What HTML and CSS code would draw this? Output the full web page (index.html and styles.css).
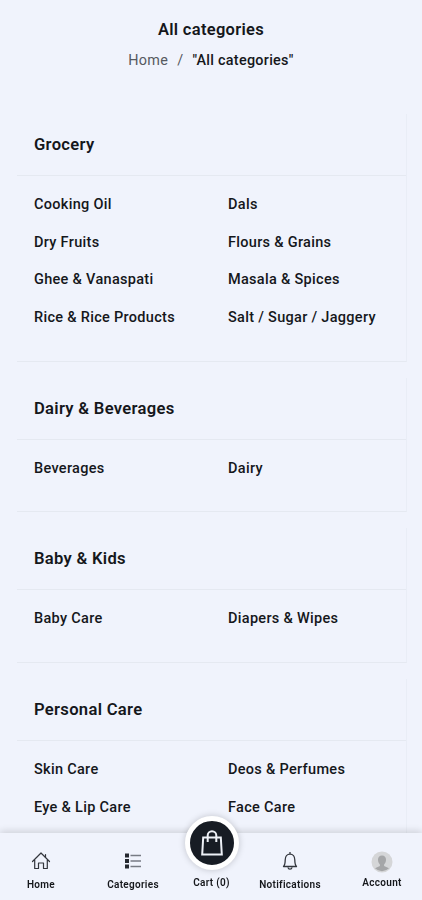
FILE: index.html
```html
<!DOCTYPE html>
<html lang="en">
<head>
    <meta charset="UTF-8">
    <meta name="viewport" content="width=device-width, initial-scale=1.0">
    <title>All categories</title>
    <link rel="stylesheet" href="styles.css">
</head>
<body>
    <main class="page">
        <header class="page-header">
            <h1>All categories</h1>
            <nav class="breadcrumb">
                <a href="#">Home</a>
                <span class="slash">/</span>
                <strong>"All categories"</strong>
            </nav>
        </header>

        <section class="card">
            <h2>Grocery</h2>
            <ul>
                <li>Cooking Oil</li>
                <li>Dals</li>
                <li>Dry Fruits</li>
                <li>Flours &amp; Grains</li>
                <li>Ghee &amp; Vanaspati</li>
                <li>Masala &amp; Spices</li>
                <li>Rice &amp; Rice Products</li>
                <li>Salt / Sugar / Jaggery</li>
            </ul>
        </section>

        <section class="card">
            <h2>Dairy &amp; Beverages</h2>
            <ul>
                <li>Beverages</li>
                <li>Dairy</li>
            </ul>
        </section>

        <section class="card">
            <h2>Baby &amp; Kids</h2>
            <ul>
                <li>Baby Care</li>
                <li>Diapers &amp; Wipes</li>
            </ul>
        </section>

        <section class="card">
            <h2>Personal Care</h2>
            <ul>
                <li>Skin Care</li>
                <li>Deos &amp; Perfumes</li>
                <li>Eye &amp; Lip Care</li>
                <li>Face Care</li>
            </ul>
        </section>
    </main>

    <nav class="bottom-nav">
        <a href="#" class="nav-item home">
            <svg width="20" height="20" viewBox="0 0 20 20" fill="none" stroke="#33363d" stroke-width="1.2" stroke-linejoin="round" stroke-linecap="round">
                <path d="M1.500 10.500L10 2l8.500 8.500M3.700 9v8.500h3.800v-5.500h5v5.500h3.800V9M14.500 6.200V3.500"/>
            </svg>
            <span>Home</span>
        </a>
        <a href="#" class="nav-item categories">
            <svg width="18" height="20" viewBox="0 0 18 20">
                <path fill="#25282f" d="M1 2.500h4v4H1zM1 8h4v4H1zM1 13.500h4v4H1z"/>
                <path stroke="#777b84" stroke-width="1.300" d="M6.500 4.500H17M6.500 10H17M6.500 15.500H17"/>
            </svg>
            <span>Categories</span>
        </a>
        <a href="#" class="nav-item cart">
            <div class="cart-circle">
                <svg width="24" height="28" viewBox="0 0 24 28" fill="none" stroke="#eef1f7" stroke-width="2">
                    <path d="M3.200 8.500h17.600l1 17H2.200z"/>
                    <path d="M7.700 13V6.500a4.300 4.300 0 0 1 8.600 0V13"/>
                </svg>
            </div>
            <span>Cart (0)</span>
        </a>
        <a href="#" class="nav-item notifications">
            <svg width="18" height="20" viewBox="0 0 18 20" fill="none" stroke="#33363d" stroke-width="1.300" stroke-linejoin="round">
                <path d="M2.500 15.500c1.500-1.500 1.700-3 1.700-6.500 0-3.500 2-5.800 4.800-5.800s4.800 2.300 4.800 5.800c0 3.500.2 5 1.700 6.500zM9 1v2.200M7 16.500c.3 2.200 3.700 2.200 4 0"/>
            </svg>
            <span>Notifications</span>
        </a>
        <a href="#" class="nav-item account">
            <svg width="22" height="22" viewBox="0 0 22 22">
                <circle cx="11" cy="11" r="10.500" fill="#d5d6d8"/>
                <path fill="#a5a6a8" d="M11 4.500c2.600 0 4 1.700 4 4.300 0 2-.8 3.700-1.900 4.700v1.500l4.900 2.300a10 10 0 0 1-14 0l4.900-2.300v-1.500C7.800 12.500 7 10.800 7 8.800c0-2.600 1.400-4.300 4-4.300z"/>
            </svg>
            <span>Account</span>
        </a>
    </nav>
</body>
</html>
```
FILE: styles.css
```css
* {
    margin: 0;
    padding: 0;
    box-sizing: border-box;
}

body {
    font-family: Roboto, sans-serif;
    height: 100vh;
    overflow: hidden;
    background-color: #f0f3fc;
    color: #15171b;
}

a {
    color: inherit;
    text-decoration: none;
}

/* Title and breadcrumb */
.page-header {
    height: 114px;
    padding-top: 20px;
    text-align: center;
}

.page-header h1 {
    font-size: 16.5px;
    font-weight: 600;
    line-height: 20px;
    letter-spacing: 0.3px;
}

.breadcrumb {
    display: flex;
    justify-content: center;
    gap: 9px;
    margin-top: 10px;
    font-size: 14.4px;
    line-height: 21px;
    letter-spacing: 0.28px;
}

.breadcrumb a,
.slash {
    color: #565960;
}

.breadcrumb strong {
    font-weight: 500;
}

/* Category cards */
.card {
    margin: 0 15px 16px 17px;
    border-right: 1px solid #e9edf6;
    border-bottom: 1px solid #e5e9f1;
}

.card h2 {
    height: 62px;
    padding-left: 17px;
    border-bottom: 1px solid #e5e9f1;
    font-size: 16.6px;
    font-weight: 600;
    line-height: 62px;
    letter-spacing: 0.3px;
}

.card ul {
    display: grid;
    grid-template-columns: 194px 1fr;
    padding: 9px 0 25px 17px;
    list-style: none;
}

.card li {
    height: 37.7px;
    font-size: 14.5px;
    font-weight: 550;
    line-height: 39px;
    letter-spacing: 0.3px;
    white-space: nowrap;
}

/* Bottom navigation */
.bottom-nav {
    position: fixed;
    left: 0;
    right: 0;
    bottom: 0;
    display: grid;
    grid-template-columns: 82px 102px 55px 102px 82px;
    height: 67px;
    background-color: #f0f3fc;
    box-shadow: 0 -2px 7px rgba(0, 0, 0, 0.14);
}

.nav-item {
    display: flex;
    flex-direction: column;
    align-items: center;
    padding-top: 18px;
    font-size: 10px;
    font-weight: 600;
    line-height: 12px;
    letter-spacing: 0.3px;
    white-space: nowrap;
}

.nav-item span {
    margin-top: 8px;
}

.nav-item.account span {
    margin-top: 4px;
}

.nav-item.cart {
    padding-top: 0;
}

.nav-item.cart span {
    margin-top: 7px;
}

.cart-circle {
    display: flex;
    justify-content: center;
    align-items: center;
    flex-shrink: 0;
    width: 54px;
    height: 54px;
    margin-top: -17px;
    border: 5px solid #fff;
    border-radius: 50%;
    background-color: #171c24;
    box-shadow: 0 0 7px rgba(0, 0, 0, 0.2);
}
```
